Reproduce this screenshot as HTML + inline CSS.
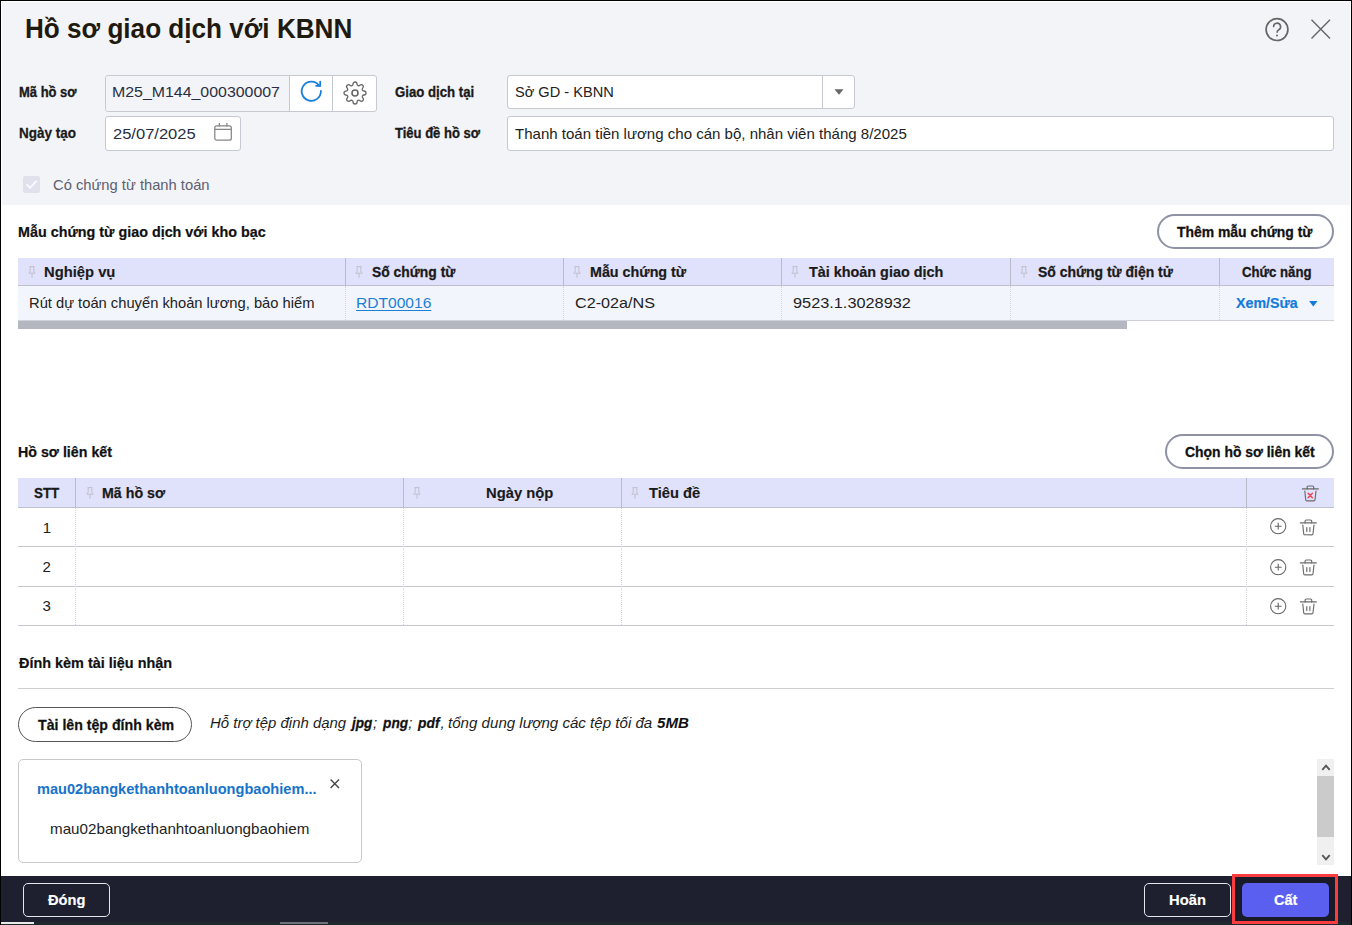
<!DOCTYPE html>
<html lang="vi"><head><meta charset="utf-8"><title>Hồ sơ giao dịch với KBNN</title>
<style>
html,body{margin:0;padding:0;}
body{width:1352px;height:925px;position:relative;overflow:hidden;background:#fff;font-family:"Liberation Sans",sans-serif;}
.a{position:absolute;box-sizing:border-box;}
.t{position:absolute;transform-origin:0 0;white-space:nowrap;line-height:20px;font-family:"Liberation Sans",sans-serif;}
.inp{border:1px solid #c6c8d2;border-radius:3px;background:#fff;}
.pill{border:2px solid #8e92a4;border-radius:18px;background:#fff;}
.th{background:#e0e1fb;}
.vl{width:1px;background:#b9bbc8;}
.dl{width:0;border-left:1px dotted #d3d4dc;}
.hl{height:1px;background:#c5c6d0;}
svg{position:absolute;overflow:visible;}

</style></head>
<body>
<!-- frame -->
<div class="a" style="left:2px;top:2px;width:1348px;height:203px;background:#f3f4f8;"></div>
<div class="a" style="left:0;top:0;width:1352px;height:1px;background:#000;"></div>
<div class="a" style="left:0;top:0;width:1px;height:925px;background:#000;"></div>
<div class="a" style="left:1351px;top:0;width:1px;height:925px;background:#000;"></div>

<!-- help + close -->
<svg style="left:1264px;top:17px" width="26" height="26" viewBox="0 0 26 26"><circle cx="13" cy="12.6" r="10.9" fill="none" stroke="#666" stroke-width="1.7"/><path d="M9.6 9.6 a3.5 3.5 0 1 1 5.2 3.1 c-1.2 .7 -1.7 1.2 -1.7 2.6" fill="none" stroke="#666" stroke-width="1.6" stroke-linecap="round"/><circle cx="13" cy="18.4" r="1" fill="#666"/></svg>
<svg style="left:1311px;top:19px" width="20" height="20" viewBox="0 0 20 20"><path d="M0.5 0.7 L19 19.5 M19 0.7 L0.5 19.5" stroke="#666" stroke-width="1.4" fill="none"/></svg>

<!-- Ma ho so group -->
<div class="a inp" style="left:105px;top:75px;width:272px;height:37px;background:#fff;"></div>
<div class="a" style="left:106px;top:76px;width:183px;height:35px;background:#f3f4f8;border-radius:3px 0 0 3px;"></div>
<div class="a vl" style="left:289px;top:76px;height:35px;background:#c6c8d2;"></div>
<div class="a vl" style="left:332px;top:76px;height:35px;background:#c6c8d2;"></div>
<!-- refresh icon -->
<svg style="left:300px;top:80px" width="23" height="23" viewBox="0 0 23 23"><path d="M20.9 10.9 A9.6 9.6 0 1 1 19.3 5.9" fill="none" stroke="#1a7fdc" stroke-width="1.8" stroke-linecap="round"/><path d="M20.2 1.6 V5.8 H16.1" fill="none" stroke="#1a7fdc" stroke-width="1.8" stroke-linecap="round" stroke-linejoin="miter"/></svg>
<!-- gear icon -->
<svg style="left:342.9px;top:81.1px" width="24" height="24" viewBox="0 0 24 24"><circle cx="12" cy="12" r="3" fill="none" stroke="#666" stroke-width="1.6"/><path d="M19.4 15a1.65 1.65 0 0 0 .33 1.82l.06.06a2 2 0 1 1-2.83 2.83l-.06-.06a1.65 1.65 0 0 0-1.82-.33 1.65 1.65 0 0 0-1 1.51V21a2 2 0 1 1-4 0v-.09A1.65 1.65 0 0 0 9 19.4a1.65 1.65 0 0 0-1.82.33l-.06.06a2 2 0 1 1-2.83-2.83l.06-.06a1.65 1.65 0 0 0 .33-1.82 1.65 1.65 0 0 0-1.51-1H3a2 2 0 1 1 0-4h.09A1.65 1.65 0 0 0 4.6 9a1.65 1.65 0 0 0-.33-1.82l-.06-.06a2 2 0 1 1 2.83-2.83l.06.06a1.65 1.65 0 0 0 1.82.33H9a1.65 1.65 0 0 0 1-1.51V3a2 2 0 1 1 4 0v.09a1.65 1.65 0 0 0 1 1.51 1.65 1.65 0 0 0 1.82-.33l.06-.06a2 2 0 1 1 2.83 2.83l-.06.06a1.65 1.65 0 0 0-.33 1.82V9a1.65 1.65 0 0 0 1.51 1H21a2 2 0 1 1 0 4h-.09a1.65 1.65 0 0 0-1.51 1z" fill="none" stroke="#666" stroke-width="1.3"/></svg>

<!-- date -->
<div class="a inp" style="left:105px;top:116px;width:136px;height:35px;"></div>
<svg style="left:214px;top:122px" width="19" height="20" viewBox="0 0 19 20"><rect x="0.8" y="3.8" width="16.5" height="14.4" rx="2" fill="none" stroke="#858585" stroke-width="1.25"/><path d="M0.8 7.4 H17.3 M5.4 0.9 V4.4 M12.9 0.9 V4.4" stroke="#858585" stroke-width="1.25" fill="none"/></svg>

<!-- select -->
<div class="a inp" style="left:507px;top:75px;width:348px;height:34px;"></div>
<div class="a vl" style="left:822px;top:76px;height:32px;background:#c6c8d2;"></div>
<svg style="left:834px;top:89px" width="10" height="6" viewBox="0 0 10 6"><path d="M0.5 0.3 H9.5 L5 5.7 Z" fill="#666"/></svg>

<!-- title input -->
<div class="a inp" style="left:507px;top:116px;width:827px;height:35px;"></div>

<!-- checkbox -->
<div class="a" style="left:23px;top:176px;width:17px;height:17px;background:#e0e1ed;border-radius:2px;"></div>
<svg style="left:23px;top:176px" width="17" height="17" viewBox="0 0 17 17"><path d="M4 8.8 L7.2 11.8 L13 5.4" fill="none" stroke="#fff" stroke-opacity="0.92" stroke-width="1.7" stroke-linecap="round" stroke-linejoin="round"/></svg>

<!-- section 1 button -->
<div class="a pill" style="left:1157px;top:214px;width:177px;height:35px;"></div>

<!-- table 1 -->
<div class="a th" style="left:18px;top:258px;width:1316px;height:27px;"></div>
<div class="a hl" style="left:18px;top:285px;width:1316px;background:#bec0cb;"></div>
<div class="a" style="left:18px;top:286px;width:1316px;height:34px;background:#f3f5fd;"></div>
<div class="a hl" style="left:18px;top:320px;width:1316px;background:#cfd0da;"></div>
<div class="a" style="left:18px;top:321px;width:1109px;height:8px;background:#b4b7c0;"></div>
<div class="a vl" style="left:345px;top:258px;height:27px;"></div>
<div class="a vl" style="left:563px;top:258px;height:27px;"></div>
<div class="a vl" style="left:781px;top:258px;height:27px;"></div>
<div class="a vl" style="left:1010px;top:258px;height:27px;"></div>
<div class="a vl" style="left:1219px;top:258px;height:27px;"></div>
<div class="a dl" style="left:345px;top:286px;height:34px;"></div>
<div class="a dl" style="left:563px;top:286px;height:34px;"></div>
<div class="a dl" style="left:781px;top:286px;height:34px;"></div>
<div class="a dl" style="left:1010px;top:286px;height:34px;"></div>
<div class="a dl" style="left:1219px;top:286px;height:34px;"></div>
<!-- pins t1 -->
<svg class="pin" style="left:27.5px;top:266px" width="8" height="13" viewBox="0 0 8 13"><use href="#pin"/></svg>
<svg class="pin" style="left:354.5px;top:266px" width="8" height="13" viewBox="0 0 8 13"><use href="#pin"/></svg>
<svg class="pin" style="left:572.5px;top:266px" width="8" height="13" viewBox="0 0 8 13"><use href="#pin"/></svg>
<svg class="pin" style="left:790.5px;top:266px" width="8" height="13" viewBox="0 0 8 13"><use href="#pin"/></svg>
<svg class="pin" style="left:1019.5px;top:266px" width="8" height="13" viewBox="0 0 8 13"><use href="#pin"/></svg>
<!-- dropdown arrow -->
<svg style="left:1308.6px;top:300.5px" width="9" height="6" viewBox="0 0 9 6"><path d="M0.1 0.1 H8.5 L4.3 5.5 Z" fill="#117cdc"/></svg>

<!-- section 2 button -->
<div class="a pill" style="left:1165px;top:434px;width:169px;height:35px;"></div>

<!-- table 2 -->
<div class="a th" style="left:18px;top:478px;width:1316px;height:29px;"></div>
<div class="a hl" style="left:18px;top:507px;width:1316px;background:#bec0cb;"></div>
<div class="a hl" style="left:18px;top:546px;width:1316px;"></div>
<div class="a hl" style="left:18px;top:586px;width:1316px;"></div>
<div class="a hl" style="left:18px;top:625px;width:1316px;"></div>
<div class="a vl" style="left:75px;top:478px;height:29px;"></div>
<div class="a vl" style="left:403px;top:478px;height:29px;"></div>
<div class="a vl" style="left:621px;top:478px;height:29px;"></div>
<div class="a vl" style="left:1246px;top:478px;height:29px;"></div>
<div class="a dl" style="left:75px;top:508px;height:117px;"></div>
<div class="a dl" style="left:403px;top:508px;height:117px;"></div>
<div class="a dl" style="left:621px;top:508px;height:117px;"></div>
<div class="a dl" style="left:1246px;top:508px;height:117px;"></div>
<svg class="pin" style="left:85.5px;top:487px" width="8" height="13" viewBox="0 0 8 13"><use href="#pin"/></svg>
<svg class="pin" style="left:412.5px;top:487px" width="8" height="13" viewBox="0 0 8 13"><use href="#pin"/></svg>
<svg class="pin" style="left:630.5px;top:487px" width="8" height="13" viewBox="0 0 8 13"><use href="#pin"/></svg>

<!-- icon defs -->
<svg width="0" height="0" style="left:0;top:0">
 <defs>
  <g id="pin"><path d="M1.6 0.6 H6.4 M2.2 0.6 V5.2 L0.9 7.2 H7.1 L5.8 5.2 V0.6 M4 7.2 V11.8" fill="none" stroke="#bfc0cc" stroke-width="1"/></g>
  <g id="trash" fill="none" stroke="#6b6b6b" stroke-width="1.15" stroke-linecap="round"><path d="M0.4 3.9 H16.3"/><path d="M5.1 3.9 V2.1 a1.1 1.1 0 0 1 1.1 -1.1 H10.6 a1.1 1.1 0 0 1 1.1 1.1 V3.9"/><path d="M2.8 6 L3.7 14.7 a1.2 1.2 0 0 0 1.2 1.1 H11.8 a1.2 1.2 0 0 0 1.2 -1.1 L14 6"/><path d="M6.8 8.5 V12.6 M9.9 8.5 V12.6"/></g>
  <g id="trashx" fill="none" stroke="#6b6b6b" stroke-width="1.15" stroke-linecap="round"><path d="M0.4 3.9 H16.3"/><path d="M5.1 3.9 V2.1 a1.1 1.1 0 0 1 1.1 -1.1 H10.6 a1.1 1.1 0 0 1 1.1 1.1 V3.9"/><path d="M2.8 6 L3.7 14.7 a1.2 1.2 0 0 0 1.2 1.1 H11.8 a1.2 1.2 0 0 0 1.2 -1.1 L14 6"/><path d="M6.1 8.3 L10.4 12.7 M10.4 8.3 L6.1 12.7" stroke="#f8424c" stroke-width="1.35"/></g>
  <g id="plus" fill="none" stroke="#666" stroke-width="1.1"><circle cx="8.2" cy="8.2" r="7.6"/><path d="M8.2 4.8 V11.6 M4.8 8.2 H11.6"/></g>
 </defs>
</svg>
<svg style="left:1301.5px;top:484.5px" width="17" height="17" viewBox="0 0 17 17"><use href="#trashx"/></svg>
<svg style="left:1269.8px;top:518.3px" width="17" height="17" viewBox="0 0 17 17"><use href="#plus"/></svg>
<svg style="left:1299.6px;top:518.6px" width="17" height="17" viewBox="0 0 17 17"><use href="#trash"/></svg>
<svg style="left:1269.8px;top:558.5px" width="17" height="17" viewBox="0 0 17 17"><use href="#plus"/></svg>
<svg style="left:1299.6px;top:558.8px" width="17" height="17" viewBox="0 0 17 17"><use href="#trash"/></svg>
<svg style="left:1269.8px;top:597.5px" width="17" height="17" viewBox="0 0 17 17"><use href="#plus"/></svg>
<svg style="left:1299.6px;top:597.8px" width="17" height="17" viewBox="0 0 17 17"><use href="#trash"/></svg>

<!-- section 3 -->
<div class="a hl" style="left:18px;top:688px;width:1316px;background:#cfcfcf;"></div>
<div class="a" style="left:18px;top:707px;width:174px;height:35px;border:1px solid #555;border-radius:18px;background:#fff;"></div>

<div class="a" style="left:18px;top:759px;width:344px;height:104px;border:1px solid #c9c9c9;border-radius:5px;background:#fff;"></div>
<svg style="left:330.3px;top:779.3px" width="10" height="10" viewBox="0 0 10 10"><path d="M0.6 0.6 L9 9 M9 0.6 L0.6 9" stroke="#4a4a4a" stroke-width="1.45" fill="none"/></svg>

<!-- scrollbar -->
<div class="a" style="left:1317px;top:759px;width:17px;height:106px;background:#f0f0f0;"></div>
<div class="a" style="left:1317px;top:776px;width:17px;height:61px;background:#cbcbcb;"></div>
<svg style="left:1321px;top:763.5px" width="10" height="7" viewBox="0 0 10 7"><path d="M1.3 5.8 L5 1.7 L8.7 5.8" fill="none" stroke="#555" stroke-width="1.9"/></svg>
<svg style="left:1321px;top:853.5px" width="10" height="7" viewBox="0 0 10 7"><path d="M1.3 1.2 L5 5.3 L8.7 1.2" fill="none" stroke="#555" stroke-width="1.9"/></svg>

<!-- footer -->
<div class="a" style="left:1px;top:876px;width:1350px;height:46px;background:#1e2030;"></div>
<div class="a" style="left:1px;top:922px;width:1350px;height:3px;background:#1c2a2e;"></div>
<div class="a" style="left:1px;top:922px;width:33px;height:2px;background:#e8e8e8;"></div>
<div class="a" style="left:280px;top:922px;width:48px;height:2px;background:#6f7377;"></div>
<div class="a" style="left:23px;top:883px;width:87px;height:34px;border:1px solid #e6e6ea;border-radius:5px;"></div>
<div class="a" style="left:1144px;top:883px;width:87px;height:34px;border:1px solid #e6e6ea;border-radius:5px;"></div>
<div class="a" style="left:1232px;top:874px;width:106px;height:50px;border:3px solid #fb3d3f;background:#191b28;"></div>
<div class="a" style="left:1242px;top:883px;width:87px;height:34px;background:#5b5fef;border-radius:5px;"></div>

<span class="t" id="title" style="left:25.05px;top:19px;font-size:27.5px;font-weight:bold;font-style:normal;color:#1f1a0e;transform:scaleX(0.9496);">Hồ sơ giao dịch với KBNN</span>
<span class="t" id="l1" style="left:18.90px;top:82px;font-size:14.8px;font-weight:bold;font-style:normal;color:#1a1a1a;transform:scaleX(0.8777);-webkit-text-stroke:0.35px #1a1a1a;">Mã hồ sơ</span>
<span class="t" id="v1" style="left:111.94px;top:82px;font-size:15px;font-weight:normal;font-style:normal;color:#2a2d42;transform:scaleX(1.0597);">M25_M144_000300007</span>
<span class="t" id="l2" style="left:394.90px;top:82px;font-size:14.8px;font-weight:bold;font-style:normal;color:#1a1a1a;transform:scaleX(0.8919);-webkit-text-stroke:0.32px #1a1a1a;">Giao dịch tại</span>
<span class="t" id="v2" style="left:514.60px;top:82px;font-size:15px;font-weight:normal;font-style:normal;color:#222;transform:scaleX(0.9734);">Sở GD - KBNN</span>
<span class="t" id="l3" style="left:18.90px;top:123px;font-size:14.8px;font-weight:bold;font-style:normal;color:#1a1a1a;transform:scaleX(0.9127);-webkit-text-stroke:0.26px #1a1a1a;">Ngày tạo</span>
<span class="t" id="v3" style="left:113.00px;top:124px;font-size:15px;font-weight:normal;font-style:normal;color:#2a2d42;transform:scaleX(1.1013);">25/07/2025</span>
<span class="t" id="l4" style="left:395.30px;top:123px;font-size:14.8px;font-weight:bold;font-style:normal;color:#1a1a1a;transform:scaleX(0.8799);-webkit-text-stroke:0.35px #1a1a1a;">Tiêu đề hồ sơ</span>
<span class="t" id="v4" style="left:514.60px;top:124px;font-size:15px;font-weight:normal;font-style:normal;color:#222;transform:scaleX(1.0019);">Thanh toán tiền lương cho cán bộ, nhân viên tháng 8/2025</span>
<span class="t" id="cb" style="left:52.70px;top:175px;font-size:15px;font-weight:normal;font-style:normal;color:#5c6070;transform:scaleX(0.9823);">Có chứng từ thanh toán</span>
<span class="t" id="s1" style="left:17.97px;top:222px;font-size:15.5px;font-weight:bold;font-style:normal;color:#111;transform:scaleX(0.9251);-webkit-text-stroke:0.22px #111;">Mẫu chứng từ giao dịch với kho bạc</span>
<span class="t" id="b1" style="left:1177.40px;top:222px;font-size:15.5px;font-weight:bold;font-style:normal;color:#111;transform:scaleX(0.8981);-webkit-text-stroke:0.31px #111;">Thêm mẫu chứng từ</span>
<span class="t" id="h11" style="left:44.45px;top:262px;font-size:15.5px;font-weight:bold;font-style:normal;color:#1a1a1a;transform:scaleX(0.9530);-webkit-text-stroke:0.14px #1a1a1a;">Nghiệp vụ</span>
<span class="t" id="h12" style="left:372.00px;top:262px;font-size:15.5px;font-weight:bold;font-style:normal;color:#1a1a1a;transform:scaleX(0.8952);-webkit-text-stroke:0.31px #1a1a1a;">Số chứng từ</span>
<span class="t" id="h13" style="left:590.08px;top:262px;font-size:15.5px;font-weight:bold;font-style:normal;color:#1a1a1a;transform:scaleX(0.9229);-webkit-text-stroke:0.23px #1a1a1a;">Mẫu chứng từ</span>
<span class="t" id="h14" style="left:808.50px;top:262px;font-size:15.5px;font-weight:bold;font-style:normal;color:#1a1a1a;transform:scaleX(0.9278);-webkit-text-stroke:0.22px #1a1a1a;">Tài khoản giao dịch</span>
<span class="t" id="h15" style="left:1037.80px;top:262px;font-size:15.5px;font-weight:bold;font-style:normal;color:#1a1a1a;transform:scaleX(0.8992);-webkit-text-stroke:0.30px #1a1a1a;">Số chứng từ điện tử</span>
<span class="t" id="h16" style="left:1242.00px;top:262px;font-size:14.8px;font-weight:bold;font-style:normal;color:#1a1a1a;transform:scaleX(0.8900);-webkit-text-stroke:0.33px #1a1a1a;">Chức năng</span>
<span class="t" id="r11" style="left:28.62px;top:293px;font-size:15px;font-weight:normal;font-style:normal;color:#222;transform:scaleX(0.9812);">Rút dự toán chuyển khoản lương, bảo hiểm</span>
<span class="t" id="r12" style="left:356.06px;top:293px;font-size:15px;font-weight:normal;font-style:normal;color:#1b7fd6;transform:scaleX(1.0380);text-decoration:underline;text-underline-offset:2px;">RDT00016</span>
<span class="t" id="r13" style="left:574.60px;top:293px;font-size:15px;font-weight:normal;font-style:normal;color:#222;transform:scaleX(1.0782);">C2-02a/NS</span>
<span class="t" id="r14" style="left:792.90px;top:293px;font-size:15px;font-weight:normal;font-style:normal;color:#222;transform:scaleX(1.0870);">9523.1.3028932</span>
<span class="t" id="r16" style="left:1236.00px;top:293px;font-size:15.2px;font-weight:bold;font-style:normal;color:#117cdc;transform:scaleX(0.9364);-webkit-text-stroke:0.19px #117cdc;">Xem/Sửa</span>
<span class="t" id="s2" style="left:17.98px;top:442px;font-size:15.5px;font-weight:bold;font-style:normal;color:#111;transform:scaleX(0.9183);-webkit-text-stroke:0.25px #111;">Hồ sơ liên kết</span>
<span class="t" id="b2" style="left:1184.50px;top:442px;font-size:15.5px;font-weight:bold;font-style:normal;color:#111;transform:scaleX(0.8972);-webkit-text-stroke:0.31px #111;">Chọn hồ sơ liên kết</span>
<span class="t" id="h21" style="left:34.00px;top:483px;font-size:14.8px;font-weight:bold;font-style:normal;color:#1a1a1a;transform:scaleX(0.9030);-webkit-text-stroke:0.29px #1a1a1a;">STT</span>
<span class="t" id="h22" style="left:101.78px;top:483px;font-size:15.5px;font-weight:bold;font-style:normal;color:#1a1a1a;transform:scaleX(0.9170);-webkit-text-stroke:0.25px #1a1a1a;">Mã hồ sơ</span>
<span class="t" id="h23" style="left:486.05px;top:483px;font-size:15.5px;font-weight:bold;font-style:normal;color:#1a1a1a;transform:scaleX(0.9545);-webkit-text-stroke:0.14px #1a1a1a;">Ngày nộp</span>
<span class="t" id="h24" style="left:648.50px;top:483px;font-size:15.5px;font-weight:bold;font-style:normal;color:#1a1a1a;transform:scaleX(0.9474);-webkit-text-stroke:0.16px #1a1a1a;">Tiêu đề</span>
<span class="t" id="n1" style="left:42.80px;top:518px;font-size:15px;font-weight:normal;font-style:normal;color:#222;transform:scaleX(1.0000);">1</span>
<span class="t" id="n2" style="left:42.50px;top:557px;font-size:15px;font-weight:normal;font-style:normal;color:#222;transform:scaleX(1.0000);">2</span>
<span class="t" id="n3" style="left:42.50px;top:596px;font-size:15px;font-weight:normal;font-style:normal;color:#222;transform:scaleX(1.0000);">3</span>
<span class="t" id="s3" style="left:18.90px;top:653px;font-size:15.5px;font-weight:bold;font-style:normal;color:#111;transform:scaleX(0.9309);-webkit-text-stroke:0.21px #111;">Đính kèm tài liệu nhận</span>
<span class="t" id="b3" style="left:37.60px;top:715px;font-size:15.5px;font-weight:bold;font-style:normal;color:#111;transform:scaleX(0.9135);-webkit-text-stroke:0.26px #111;">Tài lên tệp đính kèm</span>
<span class="t" id="lk" style="left:37.00px;top:779px;font-size:15px;font-weight:bold;font-style:normal;color:#1673c9;transform:scaleX(0.9723);">mau02bangkethanhtoanluongbaohiem...</span>
<span class="t" id="pl" style="left:49.99px;top:819px;font-size:15px;font-weight:normal;font-style:normal;color:#222;transform:scaleX(1.0128);">mau02bangkethanhtoanluongbaohiem</span>
<span class="t" id="it1" style="left:210.20px;top:713px;font-size:15px;font-weight:normal;font-style:italic;color:#1c1c1c;transform:scaleX(0.9963);">Hỗ trợ tệp định dạng</span>
<span class="t" id="it2" style="left:352.11px;top:713px;font-size:15px;font-weight:bold;font-style:italic;color:#111;transform:scaleX(0.9042);-webkit-text-stroke:0.29px #111;">jpg</span>
<span class="t" id="it3" style="left:373.00px;top:713px;font-size:15px;font-weight:normal;font-style:italic;color:#1c1c1c;transform:scaleX(1.0000);">;</span>
<span class="t" id="it4" style="left:382.51px;top:713px;font-size:15px;font-weight:bold;font-style:italic;color:#111;transform:scaleX(0.9144);-webkit-text-stroke:0.26px #111;">png</span>
<span class="t" id="it5" style="left:408.30px;top:713px;font-size:15px;font-weight:normal;font-style:italic;color:#1c1c1c;transform:scaleX(1.0000);">;</span>
<span class="t" id="it6" style="left:417.62px;top:713px;font-size:15px;font-weight:bold;font-style:italic;color:#111;transform:scaleX(0.9231);-webkit-text-stroke:0.23px #111;">pdf</span>
<span class="t" id="it7" style="left:440.60px;top:713px;font-size:15px;font-weight:normal;font-style:italic;color:#1c1c1c;transform:scaleX(1.0000);">,</span>
<span class="t" id="it8" style="left:447.80px;top:713px;font-size:15px;font-weight:normal;font-style:italic;color:#1c1c1c;transform:scaleX(1.0067);">tổng dung lượng các tệp tối đa</span>
<span class="t" id="it9" style="left:656.70px;top:713px;font-size:15px;font-weight:bold;font-style:italic;color:#111;transform:scaleX(1.0051);">5MB</span>
<span class="t" id="f1" style="left:48.00px;top:890px;font-size:15.5px;font-weight:bold;font-style:normal;color:#fff;transform:scaleX(0.9456);-webkit-text-stroke:0.16px #fff;">Đóng</span>
<span class="t" id="f2" style="left:1168.75px;top:890px;font-size:15.5px;font-weight:bold;font-style:normal;color:#fff;transform:scaleX(0.9522);-webkit-text-stroke:0.14px #fff;">Hoãn</span>
<span class="t" id="f3" style="left:1274.00px;top:890px;font-size:15.5px;font-weight:bold;font-style:normal;color:#fff;transform:scaleX(0.9350);-webkit-text-stroke:0.20px #fff;">Cất</span>
</body></html>
